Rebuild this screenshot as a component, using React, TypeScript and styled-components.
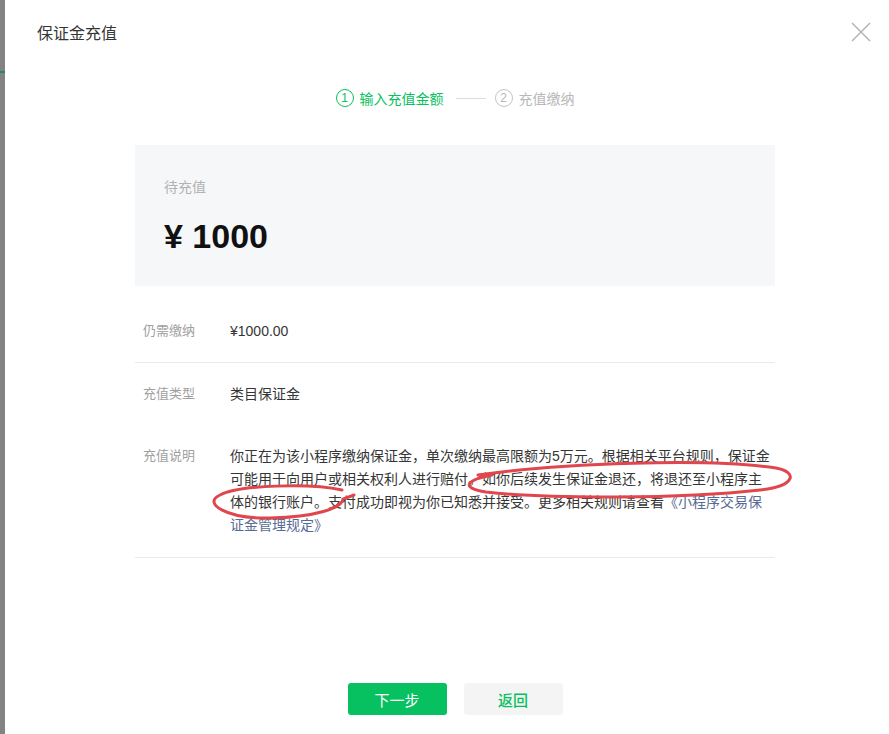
import { createGlobalStyle } from "styled-components";
import styled from "styled-components";

const GlobalStyle = createGlobalStyle`
  html, body {
    margin: 0;
    padding: 0;
    height: 734px;
    overflow: hidden;
    background: #ffffff;
  }
  body {
    font-family: "Liberation Sans", "Noto Sans CJK SC", sans-serif;
    color: #353535;
  }
`;

const GREEN = "#07c160";

const Page = styled.div`
  display: flex;
  height: 734px;
  width: 889px;
  overflow: hidden;
`;

const BackdropStrip = styled.div`
  flex: 0 0 5px;
  background: #838383;
  display: flex;
  flex-direction: column;
  padding-top: 71px;
  box-sizing: border-box;
`;

const StripMark = styled.div`
  height: 2px;
  background: #1f8a5a;
`;

const Modal = styled.div`
  flex: 0 0 900px;
  width: 900px;
  background: #ffffff;
  display: flex;
  flex-direction: column;
`;

const Header = styled.div`
  height: 64px;
  display: flex;
  align-items: center;
  justify-content: space-between;
  padding: 0 34px 0 32px;
`;

const Title = styled.div`
  font-size: 16px;
  color: #353535;
`;

const CloseButton = styled.div`
  width: 20px;
  height: 20px;
  display: flex;
  align-items: center;
  justify-content: center;
`;

const Steps = styled.div`
  display: flex;
  align-items: center;
  justify-content: center;
  margin-top: 24px;
  height: 20px;
  font-size: 14px;
`;

const Step = styled.div<{ $active: boolean }>`
  display: flex;
  align-items: center;
  gap: 6px;
  color: ${({ $active }) => ($active ? GREEN : "#b8b8b8")};
`;

const StepNum = styled.span<{ $active: boolean }>`
  width: 16px;
  height: 16px;
  border-radius: 50%;
  border: 1px solid ${({ $active }) => ($active ? GREEN : "#c4c4c4")};
  display: flex;
  align-items: center;
  justify-content: center;
  font-size: 12px;
  line-height: 1;
`;

const StepLine = styled.div`
  width: 30px;
  height: 1px;
  background: #dcdcdc;
  margin: 0 9px 0 12px;
`;

const Content = styled.div`
  width: 640px;
  margin: 37px auto 0;
  display: flex;
  flex-direction: column;
`;

const AmountCard = styled.div`
  background: #f6f7f9;
  height: 141px;
  box-sizing: border-box;
  padding: 32px 29px 0;
  display: flex;
  flex-direction: column;
`;

const AmountLabel = styled.div`
  font-size: 14px;
  line-height: 20px;
  color: #b2b2b2;
`;

const AmountValue = styled.div`
  margin-top: 19px;
  font-size: 34px;
  line-height: 40px;
  font-weight: 700;
  color: #111111;
`;

const InfoList = styled.div`
  margin-top: 14px;
  display: flex;
  flex-direction: column;
`;

const InfoRow = styled.div<{ $divider: boolean }>`
  display: flex;
  padding: 20px 0 20px 8px;
  border-bottom: ${({ $divider }) => ($divider ? "1px solid #e9e9e9" : "none")};
`;

const InfoLabel = styled.div`
  flex: 0 0 87px;
  font-size: 13px;
  line-height: 22px;
  color: #a0a0a0;
`;

const InfoValue = styled.div`
  flex: 1;
  font-size: 14px;
  line-height: 22px;
  color: #353535;
`;

const Description = styled.div`
  flex: 1;
  position: relative;
  font-size: 14px;
  line-height: 23px;
  color: #353535;
`;

const RuleLink = styled.span`
  color: #576b95;
`;

const Annotation = styled.svg`
  position: absolute;
  left: -30px;
  top: 0;
  width: 600px;
  height: 100px;
  pointer-events: none;
  overflow: visible;
`;

const Footer = styled.div`
  display: flex;
  justify-content: center;
  gap: 17px;
  margin-top: 125px;
`;

const Button = styled.button<{ $primary: boolean }>`
  width: 99px;
  height: 32px;
  border: none;
  border-radius: 3px;
  font-family: "Liberation Sans", "Noto Sans CJK SC", sans-serif;
  font-size: 15px;
  background: ${({ $primary }) => ($primary ? GREEN : "#f4f4f4")};
  color: ${({ $primary }) => ($primary ? "#ffffff" : GREEN)};
  font-weight: ${({ $primary }) => ($primary ? 400 : 500)};
`;

export default function App() {
  return (
    <>
      <GlobalStyle />
      <Page>
        <BackdropStrip>
          <StripMark />
        </BackdropStrip>
        <Modal>
          <Header>
            <Title>保证金充值</Title>
            <CloseButton>
              <svg width="20" height="20" viewBox="0 0 20 20">
                <path
                  d="M1 1 L19 19 M19 1 L1 19"
                  stroke="#b4b4b4"
                  strokeWidth="1.5"
                  fill="none"
                />
              </svg>
            </CloseButton>
          </Header>

          <Steps>
            <Step $active={true}>
              <StepNum $active={true}>1</StepNum>
              <span>输入充值金额</span>
            </Step>
            <StepLine />
            <Step $active={false}>
              <StepNum $active={false}>2</StepNum>
              <span>充值缴纳</span>
            </Step>
          </Steps>

          <Content>
            <AmountCard>
              <AmountLabel>待充值</AmountLabel>
              <AmountValue>¥ 1000</AmountValue>
            </AmountCard>

            <InfoList>
              <InfoRow $divider={true}>
                <InfoLabel>仍需缴纳</InfoLabel>
                <InfoValue>¥1000.00</InfoValue>
              </InfoRow>
              <InfoRow $divider={false}>
                <InfoLabel>充值类型</InfoLabel>
                <InfoValue>类目保证金</InfoValue>
              </InfoRow>
              <InfoRow $divider={true}>
                <InfoLabel>充值说明</InfoLabel>
                <Description>
                  你正在为该小程序缴纳保证金，单次缴纳最高限额为5万元。根据相关平台规则，保证金可能用于向用户或相关权利人进行赔付。如你后续发生保证金退还，将退还至小程序主体的银行账户。支付成功即视为你已知悉并接受。更多相关规则请查看
                  <RuleLink>《小程序交易保证金管理规定》</RuleLink>
                  <Annotation viewBox="-30 0 600 100">
                    <path
                      d="M248 30 C 330 18, 480 13, 546 23 C 568 27, 566 41, 530 45 C 450 54, 320 54, 256 47 C 230 43, 236 35, 262 30"
                      stroke="#e0464c"
                      strokeWidth="3"
                      fill="none"
                      strokeLinecap="round"
                    />
                    <path
                      d="M112 45 C 80 38, 10 40, -10 50 C -28 58, -4 74, 40 73 C 86 72, 112 63, 113 54 L 124 50"
                      stroke="#e0464c"
                      strokeWidth="3"
                      fill="none"
                      strokeLinecap="round"
                    />
                  </Annotation>
                </Description>
              </InfoRow>
            </InfoList>
          </Content>

          <Footer>
            <Button $primary={true}>下一步</Button>
            <Button $primary={false}>返回</Button>
          </Footer>
        </Modal>
      </Page>
    </>
  );
}
